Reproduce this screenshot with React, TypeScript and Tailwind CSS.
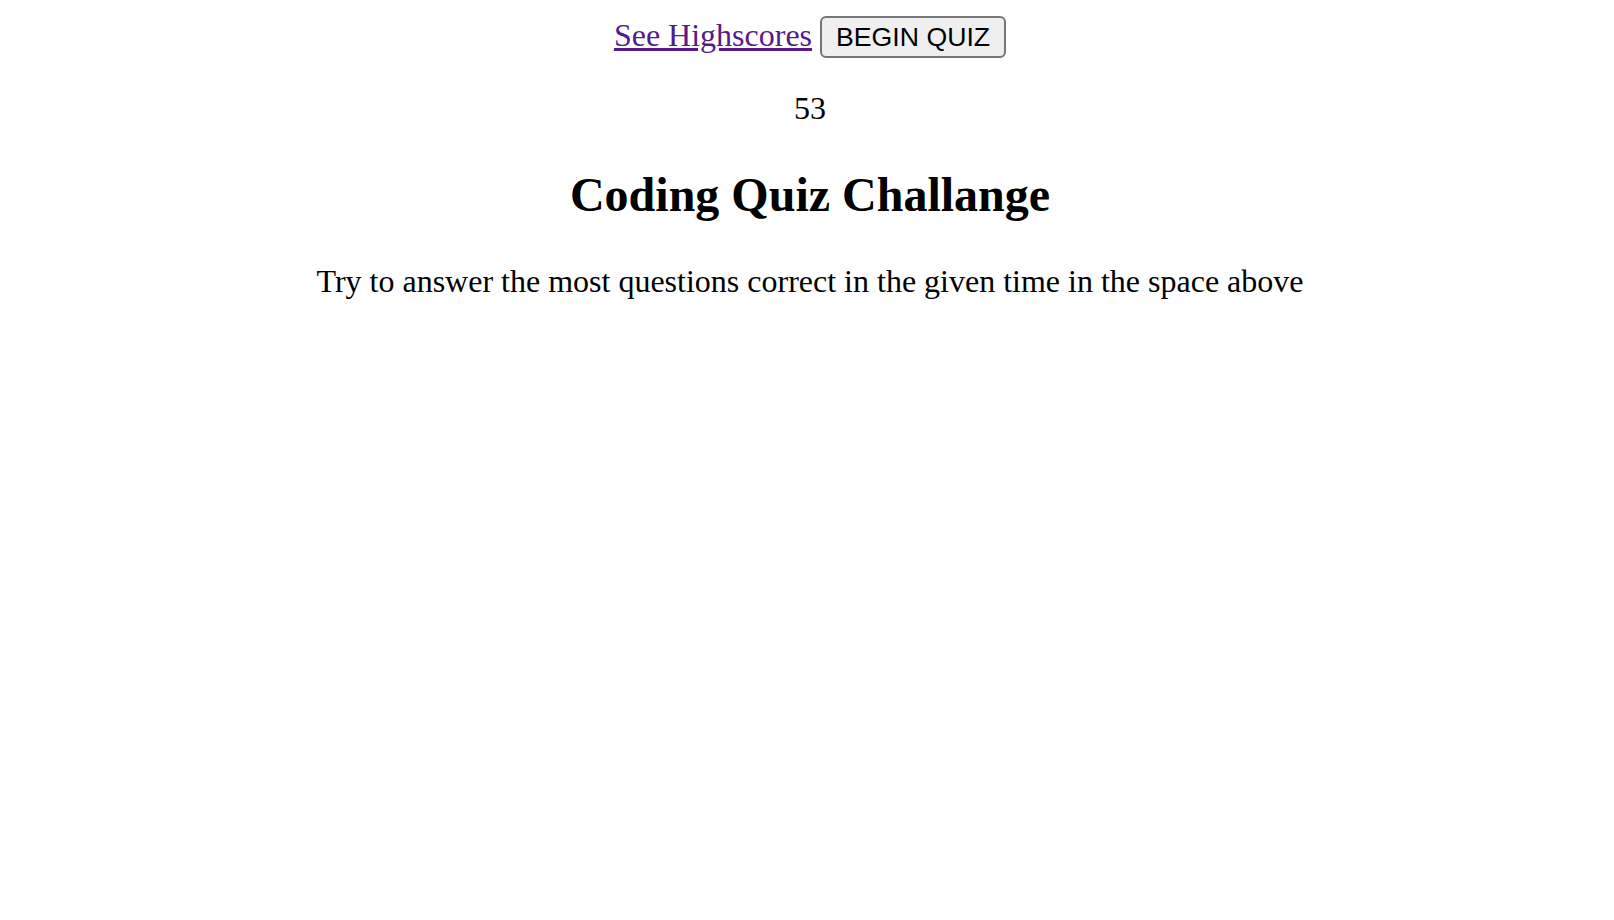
import React from "react";

export default function App() {
  return (
    <div className="min-h-[920px] bg-white pt-4 pb-4 pl-[19px] pr-[13px] text-center text-black text-[32px] leading-[1.15]" style={{ fontFamily: '"Liberation Serif", "Times New Roman", serif' }}>
      <div>
        <a href="#" className="text-[#551a8b] underline">See Highscores</a>{" "}
        <button className="h-[42px] rounded-[6px] border-2 border-[#767676] bg-[#efefef] px-[14px] py-0 text-[26.67px] leading-[1.15] text-black" style={{ fontFamily: '"Liberation Sans", Arial, sans-serif' }}>
          BEGIN QUIZ
        </button>
      </div>
      <div className="mt-[32px]">53</div>
      <h1 className="mt-[40px] mb-[41px] text-[48px] font-bold leading-[1.15]">Coding Quiz Challange</h1>
      <p className="m-0">Try to answer the most questions correct in the given time in the space above</p>
    </div>
  );
}
